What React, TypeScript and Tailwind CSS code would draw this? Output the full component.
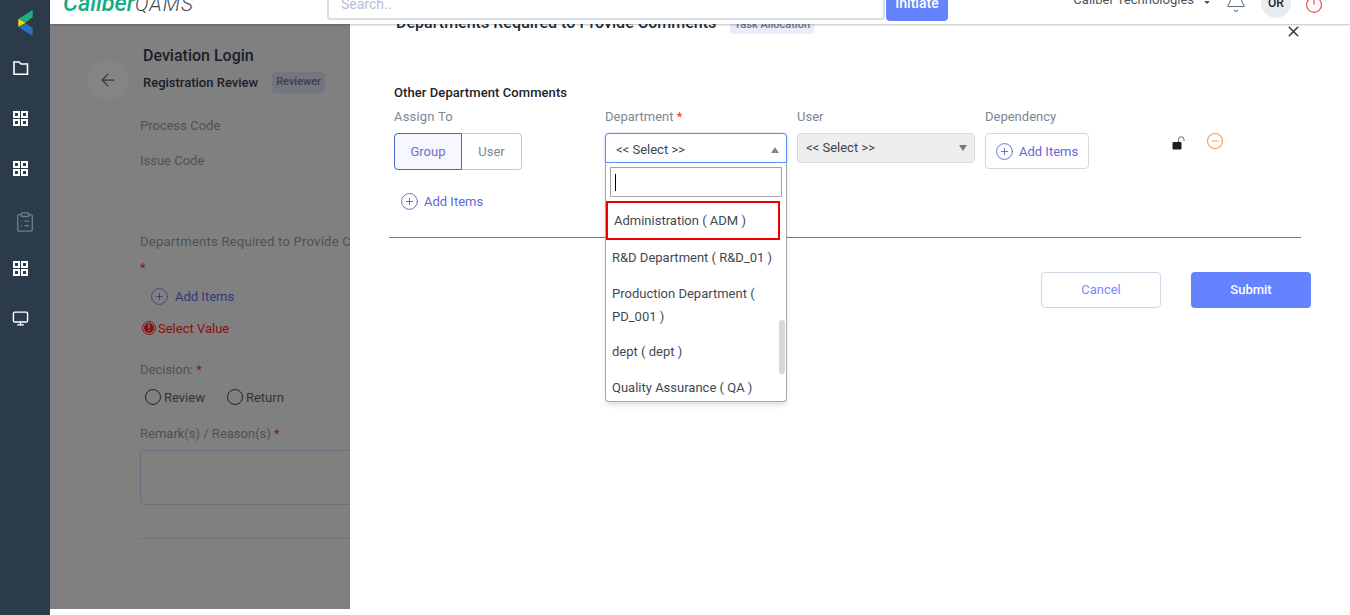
import React from 'react';
import { ArrowLeft, Bell, CirclePlus, MinusCircle, Monitor, Power, X, ClipboardList } from 'lucide-react';

const GridIcon = () => (
  <svg width="15" height="15" viewBox="0 0 15 15" fill="none" stroke="#fff" strokeWidth="2">
    <rect x="1" y="1" width="5" height="5" />
    <rect x="9" y="1" width="5" height="5" />
    <rect x="1" y="9" width="5" height="5" />
    <rect x="9" y="9" width="5" height="5" />
  </svg>
);

const FolderIcon = () => (
  <svg width="16" height="16" viewBox="0 0 16 16" fill="none" stroke="#fff" strokeWidth="1.6">
    <path d="M1 2 H6 L8 4 H14.5 V14.2 H1 Z" />
  </svg>
);

const Sidebar = () => (
  <aside className="w-[50px] h-[615px] shrink-0 bg-[#2c3b4a] flex flex-col items-start pt-[10px]">
    <svg width="16" height="26" viewBox="0 0 16 26" className="ml-[17px]">
      <path d="M15.7 0 L15.7 7 L9 12.3 L1.3 9 Z" fill="#1fae7e" />
      <path d="M1.3 9 L9 12.7 L1.3 16.7 Z" fill="#f5d90a" />
      <path d="M1.3 17 L9 13.5 L15.7 18 L15.7 26 Z" fill="#2a6fb8" />
    </svg>
    <div className="ml-[13px] mt-[24px]"><FolderIcon /></div>
    <div className="ml-[13px] mt-[35px]"><GridIcon /></div>
    <div className="ml-[13px] mt-[35px]"><GridIcon /></div>
    <ClipboardList size={22} strokeWidth={1.5} className="ml-[14px] mt-[35px] text-[#6f7c8a]" />
    <div className="ml-[13px] mt-[28px]"><GridIcon /></div>
    <Monitor size={17} strokeWidth={2} className="ml-[12px] mt-[34px] text-white" />
  </aside>
);

const Header = () => (
  <header className="absolute z-20 left-[50px] right-0 top-0 h-6 bg-white shadow-[0_1px_2px_rgba(0,0,0,0.25)] flex items-end overflow-hidden">
    <div className="w-[277px] h-full relative overflow-hidden">
      <div className="absolute left-[13px] -top-[15px] text-[23.5px] leading-[36px] whitespace-nowrap">
        <span className="text-[#12ad84] italic font-medium">Caliber</span>
        <span className="text-[#3f4a55] italic font-light text-[20.5px] tracking-wider">QAMS</span>
      </div>
    </div>
    <div className="w-[558px] h-[44px] mb-[4px] border-2 border-[#d6deea] rounded flex items-end px-3 pb-[4px] text-sm text-[#b4c0d6]">Search..</div>
    <button className="ml-[1px] w-[62px] h-[44px] bg-[#6583fe] text-white text-sm font-medium rounded flex items-end justify-center pb-[8px] mb-[3px]">Initiate</button>
    <div className="ml-auto flex items-center h-full">
      <span className="text-[13px] text-[#4a5560] whitespace-nowrap -mt-[24px]">Caliber Technologies</span>
      <span className="ml-[10px] -mt-[20px] w-0 h-0 border-x-[3px] border-x-transparent border-t-[3px] border-t-[#4a5560]" />
      <Bell size={22} strokeWidth={1.1} className="ml-[15px] -mt-[20px] text-[#5f6e7c]" />
      <div className="ml-[14px] -mt-[18px] w-[30px] h-[30px] rounded-full bg-[#e9ecef] text-xs font-medium text-[#222] flex items-center justify-center">OR</div>
      <Power size={20} strokeWidth={1.5} className="ml-[13px] mr-[26px] -mt-[17px] text-[#ee5463]" />
    </div>
  </header>
);

const Background = () => (
  <main className="w-[300px] h-[609px] bg-[#808080] overflow-hidden shrink-0 relative whitespace-nowrap text-[13px] text-[#4d5258]">
    <div className="flex pt-[46px]">
      <div className="w-10 h-10 ml-[38px] mt-[14px] rounded-full bg-[#848484] flex items-center justify-center shrink-0 text-[#32373d]">
        <ArrowLeft size={20} strokeWidth={1.5} />
      </div>
      <div className="ml-[15px]">
        <div className="text-base font-medium leading-5 text-[#1b2029]">Deviation Login</div>
        <div className="flex items-center mt-[6px]">
          <span className="text-[13px] font-medium text-[#1b2029]">Registration Review</span>
          <span className="ml-[14px] px-1 py-[2px] rounded bg-[#73757f] text-[11px] font-medium text-[#3c4049]">Reviewer</span>
        </div>
      </div>
    </div>
    <div className="ml-[90px] mt-[16px]">Process Code</div>
    <div className="ml-[90px] mt-[15px]">Issue Code</div>
    <div className="ml-[90px] mt-[62px] tracking-[0.25px]">Departments Required to Provide Comments</div>
    <div className="ml-[90px] mt-[6px] text-[#8c1414]">*</div>
    <div className="ml-[100px] mt-[10px] flex items-center text-[#2f3b7c]">
      <CirclePlus size={19} strokeWidth={1} />
      <span className="ml-[6px]">Add Items</span>
    </div>
    <div className="ml-[92px] mt-[12px] flex items-center text-[#8b0e0e]">
      <span className="w-[14px] h-[14px] rounded-full border border-[#8b0e0e] flex items-center justify-center">
        <span className="w-[10px] h-[10px] rounded-full bg-[#8b0e0e] text-[#808080] text-[9px] font-bold leading-[10px] text-center">!</span>
      </span>
      <span className="ml-[2px]">Select Value</span>
    </div>
    <div className="ml-[90px] mt-[22px]">Decision: <span className="text-[#8c1414]">*</span></div>
    <div className="ml-[95px] mt-[8px] flex items-center text-[#2e343c]">
      <span className="w-4 h-4 rounded-full border border-[#1f2630]" />
      <span className="ml-[3px]">Review</span>
      <span className="ml-[22px] w-4 h-4 rounded-full border border-[#1f2630]" />
      <span className="ml-[3px]">Return</span>
    </div>
    <div className="ml-[90px] mt-[17px]">Remark(s) / Reason(s) <span className="text-[#8c1414]">*</span></div>
    <div className="ml-[90px] mt-[6px] h-[55px] w-[260px] border border-[#6b6f80] rounded" />
    <div className="ml-[90px] mt-[33px] h-px bg-[#727272]" />
  </main>
);

const OutlineAdd = ({ className }: { className?: string }) => (
  <div className={`flex items-center text-[13px] text-[#5f68d8] ${className ?? ''}`}>
    <CirclePlus size={19} strokeWidth={1} className="text-[#3f51c5]" />
    <span className="ml-[5px]">Add Items</span>
  </div>
);

const DepartmentSelect = () => (
  <div className="w-[182px] relative">
    <div className="h-[30px] border border-[#5b8def] rounded-t shadow-[0_0_2px_rgba(91,141,239,0.6)] flex items-center justify-between pl-[10px] pr-[7px] pt-[3px] text-[13px] text-[#3c4650]">
      <span>&lt;&lt; Select &gt;&gt;</span>
      <span className="w-0 h-0 border-x-[4px] border-x-transparent border-b-[6px] border-b-[#888]" />
    </div>
    <div className="absolute z-10 left-0 top-[29px] w-[182px] h-[240px] bg-white border border-[#a8a8a8] border-t-[#5b8def] rounded-b shadow-md overflow-hidden text-[13px] text-[#3f4953]">
      <div className="mx-[4px] mt-[4px] h-[30px] border border-[#a3a3a3] flex items-center pl-[4px]">
        <span className="w-px h-[17px] bg-black" />
      </div>
      <div className="mt-[4px] h-[39px] border-2 border-[#ee0000] flex items-center pl-[6px] w-[174px]">Administration ( ADM )</div>
      <div className="pl-[6px] leading-[23px]">
        <div className="mt-[6px]">R&amp;D Department ( R&amp;D_01 )</div>
        <div className="mt-[13px] w-[160px] whitespace-normal">Production Department ( PD_001 )</div>
        <div className="mt-[12px]">dept ( dept )</div>
        <div className="mt-[13px]">Quality Assurance ( QA )</div>
      </div>
      <div className="absolute right-[1px] top-[157px] w-[6px] h-[54px] rounded bg-[#d4d8dc]" />
    </div>
  </div>
);

const OpenLock = () => (
  <svg width="14" height="14" viewBox="0 0 14 14" className="mt-[4px]">
    <path d="M6.5 6 V3.5 A2.7 2.7 0 0 1 12 3.5 V5" fill="none" stroke="#4b6a8c" strokeWidth="1" />
    <rect x="0.5" y="6" width="9" height="7.5" rx="1" fill="#1c1f26" />
  </svg>
);

const Drawer = () => (
  <section className="flex-1 h-[615px] bg-white relative overflow-hidden whitespace-nowrap">
    <div className="absolute left-[46px] top-[11px] flex items-center">
      <span className="text-base font-medium text-[#232a33] tracking-[0.02px]">Departments Required to Provide Comments</span>
      <span className="ml-[14px] mt-[3px] px-[4px] h-[18px] rounded bg-[#e8ecfb] text-[11px] font-medium leading-[18px] text-[#6d7486]">Task Allocation</span>
    </div>
    <X size={17} strokeWidth={2} className="absolute left-[935px] top-[23px] text-[#333]" />
    <div className="pt-[84px] pl-[44px]">
      <div className="text-[13px] font-medium leading-[17px] text-[#1d232a] tracking-[0.08px]">Other Department Comments</div>
      <div className="flex mt-[7px]">
        <div className="w-[211px]">
          <div className="text-[13px] leading-[17px] text-[#7d8791] tracking-[0.2px]">Assign To</div>
          <div className="flex mt-[8px] text-[13px] h-[37px] w-[128px]">
            <div className="w-[68px] border border-[#4a64c8] bg-[#f7f8ff] rounded-l flex items-center justify-center text-[#6a6fc7]">Group</div>
            <div className="w-[60px] border border-l-0 border-[#c8c8c8] rounded-r flex items-center justify-center text-[#7d8791]">User</div>
          </div>
          <OutlineAdd className="mt-[22px] ml-[6px]" />
        </div>
        <div className="w-[192px]">
          <div className="text-[13px] leading-[17px] text-[#7d8791]">Department <span className="text-[#ff2b2b]">*</span></div>
          <div className="mt-[8px]"><DepartmentSelect /></div>
        </div>
        <div className="w-[188px]">
          <div className="text-[13px] leading-[17px] text-[#7d8791]">User</div>
          <div className="mt-[8px] w-[178px] h-[30px] border border-[#d0d8e2] rounded bg-[#eeeeee] flex items-center justify-between pl-2 pr-[7px] text-[13px] text-[#444]">
            <span>&lt;&lt; Select &gt;&gt;</span>
            <span className="w-0 h-0 border-x-[4px] border-x-transparent border-t-[6px] border-t-[#777]" />
          </div>
        </div>
        <div className="w-[187px]">
          <div className="text-[13px] leading-[17px] text-[#7d8791]">Dependency</div>
          <div className="mt-[8px] w-[104px] h-[36px] border border-[#d0d8e2] rounded flex items-center pl-[9px] pt-[1px]">
            <OutlineAdd />
          </div>
        </div>
        <div className="flex items-start pt-[24px]">
          <OpenLock />
          <MinusCircle size={18} strokeWidth={1.5} className="ml-[20px] text-[#f5a04a]" />
        </div>
      </div>
    </div>
    <div className="absolute left-[39px] top-[237px] w-[912px] h-px bg-[#6c7a89]" />
    <div className="absolute left-[691px] top-[272px] flex gap-[30px] text-[13px]">
      <button className="w-[120px] h-9 border border-[#ced9e6] rounded text-[#7d8bf7]">Cancel</button>
      <button className="w-[120px] h-9 rounded bg-[#6583fe] font-medium text-white">Submit</button>
    </div>
  </section>
);

export default function App() {
  return (
    <div className="w-[1350px] h-[615px] relative flex overflow-hidden bg-white font-['Roboto',sans-serif]">
      <Sidebar />
      <Header />
      <Background />
      <Drawer />
    </div>
  );
}
